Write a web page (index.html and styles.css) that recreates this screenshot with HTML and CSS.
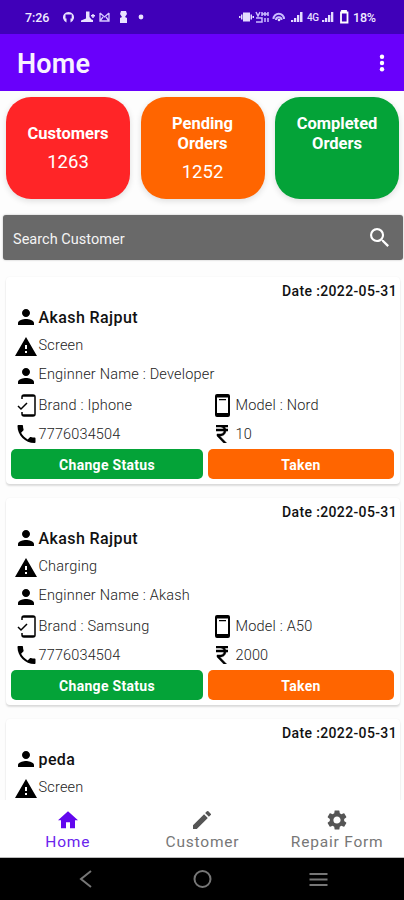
FILE: index.html
```html
<!DOCTYPE html>
<html lang="en">
<head>
<meta charset="utf-8">
<title>Home</title>
<link rel="stylesheet" href="styles.css">
</head>
<body>
<svg class="defs" aria-hidden="true">
  <symbol id="person" viewBox="4 4 16 16"><path d="M12 12c2.200 0 4-1.800 4-4s-1.800-4-4-4-4 1.800-4 4 1.800 4 4 4zm0 2c-2.700 0-8 1.300-8 4v2h16v-2c0-2.700-5.300-4-8-4z"/></symbol>
  <symbol id="warn" viewBox="1 2 22 19"><path d="M1 21h22L12 2zm12-3h-2v-2h2zm0-4h-2v-4h2z"/></symbol>
  <symbol id="brand" viewBox="0 0 19 23"><path d="M5 5V3q0-2 2-2h9q2 0 2 2v17q0 2-2 2H7q-2 0-2-2v-2M1 12l3 3 6-6" fill="none" stroke="#000" stroke-width="1.500"/><path d="M5 1h12v1.700H5zM5 20.300h12V22H5z"/></symbol>
  <symbol id="model" viewBox="0 0 15 23"><path fill-rule="evenodd" d="M2 0h11q2 0 2 2v19q0 2-2 2H2q-2 0-2-2V2Q0 0 2 0zm0 3.500v15.500h11V3.500zM4 5h7v1.300H4z"/></symbol>
  <symbol id="phone" viewBox="3 3 18 18"><path d="M6.620 10.790c1.440 2.830 3.760 5.140 6.590 6.590l2.200-2.200c.27-.27.670-.36 1.020-.24 1.120.37 2.330.57 3.570.57.550 0 1 .45 1 1V20c0 .55-.45 1-1 1C10.610 21 3 13.390 3 4c0-.55.45-1 1-1h3.500c.55 0 1 .45 1 1 0 1.250.2 2.450.57 3.570.11.35.03.740-.25 1.020z"/></symbol>
  <symbol id="rupee" viewBox="6 3 12 18"><path stroke="#000" stroke-width=".5" d="M13.660 7c-.56-1.180-1.760-2-3.160-2H6V3h12v2h-3.260c.48.580.84 1.260 1.050 2H18v2h-2.020c-.25 2.800-2.610 5-5.480 5h-.73l6.730 7h-2.770L7 14v-2h3.500c1.760 0 3.220-1.300 3.460-3H6V7z"/></symbol>
</svg>
<div class="screen">
  <header class="status">
    <span class="time">7:26</span>
    <svg class="st-left" width="86" height="14" viewBox="0 0 86 14" fill="#e9e2ff">
      <path fill-rule="evenodd" d="M4.500 12.500A5.500 5.500 0 1 1 8.500 12.500V8.500h1.200V4.500H3.500v4h1z"/>
      <path d="M24 1.500h3.500V7l2 2.500 1.500.5v2H19v-1.500l5-2zM29 5h4v1.500h-4zM30.300 4h1.400v4h-1.400z"/>
      <path d="M38 3v8h9V3M38 3l4.500 4L47 3M38 11l3-4M47 11l-3-4" fill="none" stroke="#d5c8ff" stroke-width="1.300"/>
      <path d="M59 1h5l1 3-2 3 2 1v5h-7V8l2-1-2-3z"/><circle cx="79" cy="7" r="2.400"/>
    </svg>
    <span class="grow"></span>
    <svg class="st-right" width="114" height="14" viewBox="0 0 114 14" fill="#e4dcff">
      <path d="M4 2.500h7v9H4zM2 4.500h1.500v5H2zM0 6h1.500v2H0zM11.500 4.500H13v5h-1.500zM13.500 6H15v2h-1.500z"/>
      <path d="M17 2l2 4 2-4M23 2v4M26 2v4M29 2v4M17 8h6v4h-6M26 8v4M29 8v4M23 4h6" fill="none" stroke="#cabbff" stroke-width="1.500"/>
      <path d="M34.500 9a5 5 0 0 1 10.500 0M37 10a2.500 2.500 0 0 1 5.500 0" fill="none" stroke="#cabbff" stroke-width="2"/><circle cx="40" cy="10" r="1.300"/>
      <path d="M52 10h2.300v2H52zM55 8h2.300v4H55zM58 5h2.300v7H58zM61 2h2.500v10H61zM83 10h2.300v2H83zM86 8h2.300v4H86zM89 5h2.300v7H89zM92 2h2.300v10H92z"/>
      <text x="68" y="11" class="net" textLength="12">4G</text>
      <path d="M103 1.800V.8h4v1M102 2.500h6.500v10H102z" fill="none" stroke="#fff" stroke-width="1.800"/>
    </svg>
    <span class="battery">18%</span>
  </header>
  <header class="appbar">
    <h1>Home</h1>
    <svg width="6" height="20" viewBox="0 0 6 20" fill="#fff"><circle cx="3" cy="3.700" r="2.200"/><circle cx="3" cy="10" r="2.200"/><circle cx="3" cy="16.300" r="2.200"/></svg>
  </header>
  <main>
    <section class="stats">
      <div class="stat red"><b>Customers</b><span>1263</span></div>
      <div class="stat orange"><b>Pending<br>Orders</b><span>1252</span></div>
      <div class="stat green top"><b>Completed<br>Orders</b></div>
    </section>
    <div class="search"><span>Search Customer</span>
      <svg width="19" height="19" viewBox="3 3 17.500 17.500" fill="#fff"><path d="M15.500 14h-.79l-.28-.27A6.470 6.470 0 0 0 16 9.500 6.500 6.500 0 1 0 9.500 16c1.610 0 3.090-.59 4.230-1.570l.27.280v.79l5 4.990L20.490 19zm-6 0C7.010 14 5 11.990 5 9.500S7.010 5 9.500 5 14 7.010 14 9.500 11.990 14 9.500 14z"/></svg>
    </div>
    <section class="list">
      <article class="card">
        <div class="date">Date :2022-05-31</div>
        <div class="row name"><i><svg class="person"><use href="#person"/></svg></i><span>Akash Rajput</span></div>
        <div class="row issue"><i><svg class="warn"><use href="#warn"/></svg></i><span>Screen</span></div>
        <div class="row engineer"><i><svg class="person"><use href="#person"/></svg></i><span>Enginner Name : Developer</span></div>
        <div class="pair device"><div class="row"><i><svg class="brand"><use href="#brand"/></svg></i><span>Brand : Iphone</span></div><div class="row"><i><svg class="model"><use href="#model"/></svg></i><span>Model : Nord</span></div></div>
        <div class="pair contact"><div class="row"><i><svg class="phone"><use href="#phone"/></svg></i><span class="num">7776034504</span></div><div class="row"><i><svg class="rupee"><use href="#rupee"/></svg></i><span class="num">10</span></div></div>
        <div class="actions"><button class="green">Change Status</button><button class="orange">Taken</button></div>
      </article>
      <article class="card">
        <div class="date">Date :2022-05-31</div>
        <div class="row name"><i><svg class="person"><use href="#person"/></svg></i><span>Akash Rajput</span></div>
        <div class="row issue"><i><svg class="warn"><use href="#warn"/></svg></i><span>Charging</span></div>
        <div class="row engineer"><i><svg class="person"><use href="#person"/></svg></i><span>Enginner Name : Akash</span></div>
        <div class="pair device"><div class="row"><i><svg class="brand"><use href="#brand"/></svg></i><span>Brand : Samsung</span></div><div class="row"><i><svg class="model"><use href="#model"/></svg></i><span>Model : A50</span></div></div>
        <div class="pair contact"><div class="row"><i><svg class="phone"><use href="#phone"/></svg></i><span class="num">7776034504</span></div><div class="row"><i><svg class="rupee"><use href="#rupee"/></svg></i><span class="num">2000</span></div></div>
        <div class="actions"><button class="green">Change Status</button><button class="orange">Taken</button></div>
      </article>
      <article class="card">
        <div class="date">Date :2022-05-31</div>
        <div class="row name"><i><svg class="person"><use href="#person"/></svg></i><span>peda</span></div>
        <div class="row issue"><i><svg class="warn"><use href="#warn"/></svg></i><span>Screen</span></div>
      </article>
    </section>
  </main>
  <nav class="tabs">
    <a class="active"><svg width="20" height="18" viewBox="2 3 20 17.500"><path d="M10 20v-6h4v6h5v-8h3L12 3 2 12h3v8z"/></svg><span>Home</span></a>
    <a><svg width="18" height="18" viewBox="3 3 18 18"><path d="M3 17.250V21h3.750L17.810 9.940l-3.750-3.750zM20.710 7.040a1 1 0 0 0 0-1.410l-2.340-2.340a1 1 0 0 0-1.410 0l-1.830 1.830 3.750 3.750z"/></svg><span>Customer</span></a>
    <a><svg width="20" height="20" viewBox="2 2 20 20"><path d="M19.140 12.940c.04-.3.060-.61.060-.94 0-.32-.02-.64-.07-.94l2.030-1.580a.49.49 0 0 0 .12-.61l-1.920-3.320a.488.488 0 0 0-.59-.22l-2.390.96c-.5-.38-1.030-.7-1.620-.94l-.36-2.540a.484.484 0 0 0-.48-.41h-3.840c-.24 0-.43.17-.47.410l-.36 2.540c-.59.240-1.130.570-1.620.940l-2.390-.96c-.22-.08-.47 0-.59.220L2.740 8.870c-.12.210-.08.470.12.610l2.030 1.580c-.05.300-.09.630-.09.940s.02.640.07.940l-2.030 1.580a.49.49 0 0 0-.12.610l1.920 3.320c.12.220.37.290.59.220l2.390-.96c.5.380 1.030.7 1.620.940l.36 2.540c.05.240.24.410.48.410h3.840c.24 0 .44-.17.470-.41l.36-2.540c.59-.24 1.130-.56 1.620-.94l2.390.96c.22.080.47 0 .59-.22l1.920-3.320c.12-.22.070-.47-.12-.61zM12 15.600A3.610 3.610 0 0 1 8.400 12c0-1.980 1.620-3.600 3.600-3.600s3.600 1.620 3.600 3.600-1.620 3.600-3.600 3.600z"/></svg><span>Repair Form</span></a>
  </nav>
  <footer class="system">
    <svg width="14" height="18" viewBox="0 0 14 18"><path d="M12 1L2 9l10 8"/></svg>
    <svg width="20" height="20" viewBox="0 0 20 20"><circle cx="10.500" cy="10" r="8"/></svg>
    <svg width="20" height="16" viewBox="0 0 20 16"><path d="M1.500 3h18M1.500 8.500h18M1.500 14h18"/></svg>
  </footer>
</div>
</body>
</html>
```
FILE: styles.css
```css
* { box-sizing: border-box; }
body { margin: 0; font-family: Roboto, sans-serif; background: #fff; }
.defs { display: none; }
.screen { width: 404px; height: 900px; display: flex; flex-direction: column; overflow: hidden; }
.status { height: 34px; flex: none; background: #4000b9; color: #efeaff; display: flex; align-items: center; padding: 0 27px 0 25px; font-size: 12.5px; font-weight: 500; }
.time { width: 37px; letter-spacing: -.1px; }
.grow { flex: 1; }
.battery { width: 24px; letter-spacing: -.2px; white-space: nowrap; }
.net { font: 500 10px Roboto, sans-serif; }
.appbar { height: 57px; flex: none; background: #6900fb; color: #f8f2ff; display: flex; justify-content: space-between; align-items: center; padding: 0 19px 0 17px; }
.appbar h1 { margin: 3px 0 0; font-size: 27px; line-height: 32px; font-weight: 600; letter-spacing: .2px; }
main { flex: 1; min-height: 0; overflow: hidden; background: #fdfdfd; }
.stats { display: grid; grid-template-columns: repeat(3, 124px); justify-content: space-between; padding: 6px 5px 0 6px; }
.stat { height: 102px; border-radius: 25px; color: #fff; display: flex; flex-direction: column; align-items: center; justify-content: center; text-align: center; box-shadow: 0 2px 6px rgba(0,0,0,.13); gap: 8px; padding-top: 1px; }
.stat b { font-size: 16.5px; line-height: 19.500px; font-weight: 700; }
.stat span { font-size: 18.500px; line-height: 22px; }
.stat.top { justify-content: flex-start; padding-top: 17px; }
.red { background: #ff2527; }
.orange { background: #ff6500; }
.green { background: #04a338; }
.search { margin: 16px 1px 0 3px; height: 45px; border-radius: 3px; background: #696969; color: #f4f4f4; display: flex; align-items: center; justify-content: space-between; padding: 0 14px 0 10px; font-size: 14.500px; letter-spacing: .03px; box-shadow: 0 0 2px rgba(0,0,0,.3); }
.search span { padding-top: 3px; }
.list { display: flex; flex-direction: column; gap: 14px; padding: 17px 4px 0 6px; }
.card { height: 207px; background: #fff; border-radius: 4px; padding: 0 5px 5px; box-shadow: 0 2px 2px rgba(0,0,0,.13), 0 0 2px rgba(0,0,0,.05); }
.date { height: 28px; line-height: 29px; text-align: right; font-size: 14px; font-weight: 500; letter-spacing: .36px; margin-right: -2px; color: #111; }
.row { display: flex; align-items: center; font-size: 14.500px; font-weight: 300; color: #222; white-space: nowrap; letter-spacing: .2px; }
.row i { width: 28px; margin-right: -.5px; flex: none; display: flex; justify-content: center; padding-left: 2px; }
.name { height: 24px; font-size: 16px; font-weight: 500; letter-spacing: .4px; color: #111; }
.issue { height: 32px; }
.engineer { height: 26px; }
.engineer span { padding-top: 1px; }
.pair { display: grid; grid-template-columns: 197px 1fr; }
.pair span { padding-top: 1px; }
.pair .row + .row i { padding-left: 0; }
.device { height: 36px; }
.contact { height: 22px; }
.num { letter-spacing: .15px; }
.person { width: 16px; height: 16px; }
.engineer .person { margin-top: 3px; }
.warn { width: 22px; height: 19px; margin-top: 3px; }
.brand { width: 19px; height: 23px; }
.model { width: 15px; height: 23px; }
.phone { width: 19px; height: 18px; }
.rupee { width: 12px; height: 18px; }
.actions { display: grid; grid-template-columns: 192px 186px; gap: 5px; margin-top: 4px; }
.actions button { height: 30px; border: 0; border-radius: 5px; color: #fff; font: 700 14px Roboto, sans-serif; letter-spacing: .3px; padding: 1px 0 0; }
.tabs { height: 58px; flex: none; display: grid; grid-template-columns: repeat(3, 1fr); background: #fff; border-bottom: 1px solid #bbb; }
.tabs a { display: flex; flex-direction: column; align-items: center; color: #555; fill: #555; font-size: 15.500px; letter-spacing: .8px; padding: 10px 0 0 1px; font-weight: 400; }
.tabs svg { height: 20px; }
.tabs span { line-height: 20px; margin-top: 2px; color: #777; }
.tabs .active { fill: #6207ee; }
.tabs .active span { color: #6a24ed; }
.system { height: 42px; flex: none; background: #000; display: grid; grid-template-columns: 68px 164px 68px; justify-content: center; align-items: center; justify-items: center; }
.system svg { fill: none; stroke: #777; stroke-width: 2; }
```
